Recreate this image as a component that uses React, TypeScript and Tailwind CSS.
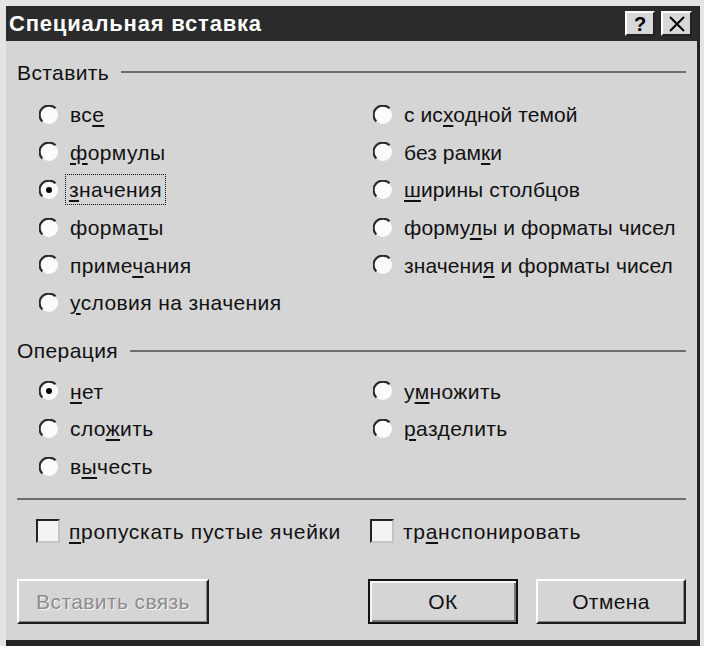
import React from 'react';

type Opt = {
    label: string;
    key: number;
    checked?: boolean;
    focused?: boolean;
};

const pasteLeft: Opt[] = [
    { label: 'все', key: 2 },
    { label: 'формулы', key: 0 },
    { label: 'значения', key: 0, checked: true, focused: true },
    { label: 'форматы', key: 5 },
    { label: 'примечания', key: 5 },
    { label: 'условия на значения', key: 0 },
];

const pasteRight: Opt[] = [
    { label: 'с исходной темой', key: 4 },
    { label: 'без рамки', key: 7 },
    { label: 'ширины столбцов', key: 0 },
    { label: 'формулы и форматы чисел', key: 5 },
    { label: 'значения и форматы чисел', key: 7 },
];

const opLeft: Opt[] = [
    { label: 'нет', key: 0, checked: true },
    { label: 'сложить', key: 3 },
    { label: 'вычесть', key: 1 },
];

const opRight: Opt[] = [
    { label: 'умножить', key: 1 },
    { label: 'разделить', key: 0 },
];

function Mnemonic({ label, k }: { label: string; k: number }) {
    return (
        <>
            {label.slice(0, k)}
            <span className="underline decoration-[1.5px] underline-offset-[3px]">
                {label.charAt(k)}
            </span>
            {label.slice(k + 1)}
        </>
    );
}

function Radio({ checked }: { checked?: boolean }) {
    return (
        <svg width="20" height="20" viewBox="0 0 20 20" className="shrink-0">
            <circle cx="10" cy="10" r="9" fill="#fbfbfb" />
            <path
                d="M3.3 16.5 A9 9 0 0 1 16.5 3.3"
                stroke="#2a2a2a"
                strokeWidth="2.2"
                fill="none"
            />
            {checked && <circle cx="10" cy="10" r="3" fill="#000" />}
        </svg>
    );
}

function RadioRow({ opt }: { opt: Opt }) {
    return (
        <div className="flex h-[37.6px] items-center gap-[10px]">
            <Radio checked={opt.checked} />
            <span
                className={
                    opt.focused
                        ? 'border border-dotted border-[#111] px-[3px] py-[4px] -ml-[4px]'
                        : 'border border-transparent py-[4px]'
                }
            >
                <Mnemonic label={opt.label} k={opt.key} />
            </span>
        </div>
    );
}

function GroupLabel({ title }: { title: string }) {
    return (
        <div className="flex h-[22px] items-center gap-[12px]">
            <span>{title}</span>
            <div className="h-[2px] flex-1 bg-[#6e6e6e]" />
        </div>
    );
}

function Checkbox({ label, k }: { label: string; k: number }) {
    return (
        <div className="flex h-[24px] items-center gap-[9px]">
            <div className="h-[24px] w-[24px] shrink-0 border-2 border-t-[#222] border-l-[#222] border-r-[#c4c4c4] border-b-[#c4c4c4] bg-[#f3f3f3]" />
            <span className="tracking-[0.7px]">
                <Mnemonic label={label} k={k} />
            </span>
        </div>
    );
}

export default function App() {
    return (
        <div className="h-[646px] w-[704px] bg-[#e4e4e4] pl-[6px] pr-[4px] pt-[6px] font-['Liberation_Sans',Arial,sans-serif] text-[21px] leading-none tracking-[0.4px] text-[#111]">
            <div className="flex h-full flex-col border-b-[6px] border-r-[3px] border-[#262626] bg-[#d5d5d5]">
                <div className="flex h-[35px] shrink-0 items-center bg-[#2b2b2b] pl-[3px] pr-[5px]">
                    <span className="flex-1 text-[22px] font-bold tracking-[0.8px] text-white">
                        Специальная вставка
                    </span>
                    <div className="flex gap-[6px]">
                        <div className="flex h-[25px] w-[30px] items-center justify-center border-2 border-t-white border-l-white border-r-[#222] border-b-[#222] bg-[#d8d8d8] text-[20px] font-bold tracking-normal text-black">
                            ?
                        </div>
                        <div className="flex h-[25px] w-[31px] items-center justify-center border-2 border-t-white border-l-white border-r-[#222] border-b-[#222] bg-[#d8d8d8]">
                            <svg width="18" height="16" viewBox="0 0 18 16">
                                <path
                                    d="M2 1 L16 15 M16 1 L2 15"
                                    stroke="#000"
                                    strokeWidth="2"
                                />
                            </svg>
                        </div>
                    </div>
                </div>

                <div className="flex flex-1 flex-col px-[11px]">
                    <div className="mt-[20px]">
                        <GroupLabel title="Вставить" />
                    </div>
                    <div className="mt-[13px] flex pl-[22px]">
                        <div className="w-[334px]">
                            {pasteLeft.map((o) => (
                                <RadioRow key={o.label} opt={o} />
                            ))}
                        </div>
                        <div className="tracking-[0.1px]">
                            {pasteRight.map((o) => (
                                <RadioRow key={o.label} opt={o} />
                            ))}
                        </div>
                    </div>

                    <div className="mt-[18px]">
                        <GroupLabel title="Операция" />
                    </div>
                    <div className="mt-[11px] flex pl-[22px]">
                        <div className="w-[334px]">
                            {opLeft.map((o) => (
                                <RadioRow key={o.label} opt={o} />
                            ))}
                        </div>
                        <div>
                            {opRight.map((o) => (
                                <RadioRow key={o.label} opt={o} />
                            ))}
                        </div>
                    </div>

                    <div className="mt-[13px] h-[2px] bg-[#6e6e6e]" />

                    <div className="mt-[19px] flex pl-[19px]">
                        <div className="w-[334px]">
                            <Checkbox label="пропускать пустые ячейки" k={0} />
                        </div>
                        <Checkbox label="транспонировать" k={2} />
                    </div>

                    <div className="mt-[36px] flex">
                        <button
                            type="button"
                            disabled
                            className="flex h-[45px] w-[192px] items-center justify-center border-2 border-t-white border-l-white border-r-[#1e1e1e] border-b-[#1e1e1e] text-[#8c8c8c] shadow-[inset_-1px_-1px_0_#8a8a8a] [text-shadow:1px_1px_0_#f4f4f4]"
                        >
                            Вставить связь
                        </button>
                        <div className="flex-1" />
                        <button
                            type="button"
                            className="flex h-[45px] w-[150px] items-center justify-center border-2 border-[#111] shadow-[inset_2px_2px_0_#f6f6f6,inset_-2px_-2px_0_#7a7a7a]"
                        >
                            ОК
                        </button>
                        <button
                            type="button"
                            className="ml-[18px] flex h-[45px] w-[150px] items-center justify-center border-2 border-t-white border-l-white border-r-[#1e1e1e] border-b-[#1e1e1e] shadow-[inset_-1px_-1px_0_#8a8a8a]"
                        >
                            Отмена
                        </button>
                    </div>
                </div>
            </div>
        </div>
    );
}
